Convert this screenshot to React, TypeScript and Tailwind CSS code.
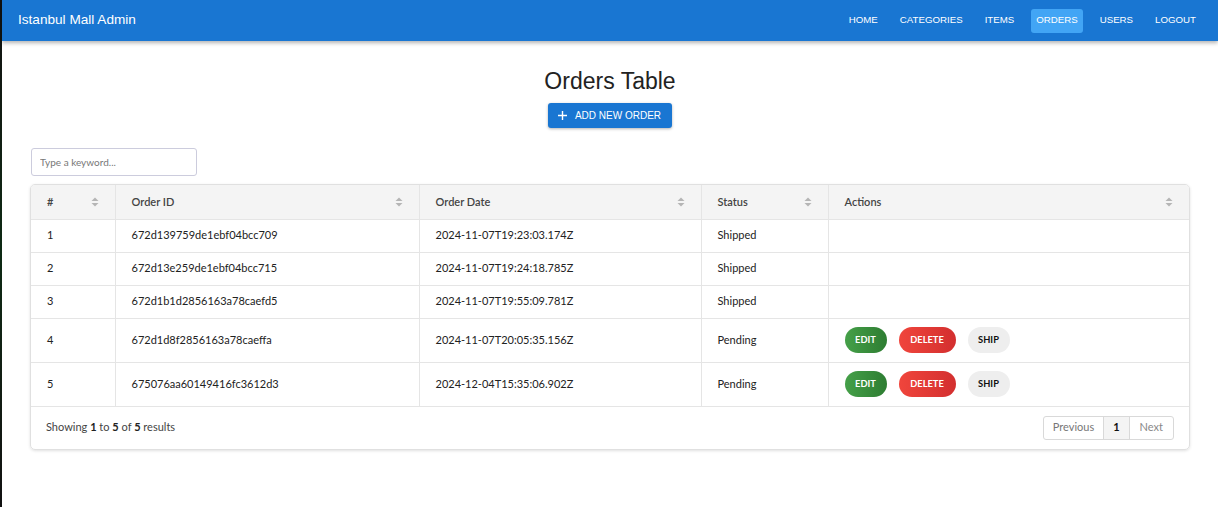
const orders = [
  { n: 1, id: "672d139759de1ebf04bcc709", date: "2024-11-07T19:23:03.174Z", status: "Shipped" },
  { n: 2, id: "672d13e259de1ebf04bcc715", date: "2024-11-07T19:24:18.785Z", status: "Shipped" },
  { n: 3, id: "672d1b1d2856163a78caefd5", date: "2024-11-07T19:55:09.781Z", status: "Shipped" },
  { n: 4, id: "672d1d8f2856163a78caeffa", date: "2024-11-07T20:05:35.156Z", status: "Pending" },
  { n: 5, id: "675076aa60149416fc3612d3", date: "2024-12-04T15:35:06.902Z", status: "Pending" },
];

const navItems = ["Home", "Categories", "Items", "Orders", "Users", "Logout"];

const SortIcon = () => (
  <svg width="8" height="10" viewBox="0 0 8 10" className="shrink-0">
    <path d="M4 0.5 L7.5 4 H0.5 Z" fill="#b5b5b5" />
    <path d="M4 9.5 L7.5 6 H0.5 Z" fill="#b5b5b5" />
  </svg>
);

const HeadCell = ({ label, className }: { label: string; className: string }) => (
  <th className={`${className} border-r border-[#e5e5e5] last:border-r-0 px-4 font-semibold text-left`}>
    <div className="flex items-center justify-between">
      <span>{label}</span>
      <SortIcon />
    </div>
  </th>
);

export default function App() {
  return (
    <div className="min-h-[507px] bg-white flex" style={{ fontFamily: "Roboto, 'Liberation Sans', sans-serif" }}>
      <div className="w-[2px] bg-gradient-to-b from-[#111] via-[#0d2a14] to-[#111] shrink-0" />
      <div className="flex-1">
        <header className="h-[41px] bg-[#1976d2] flex items-center justify-between pl-4 pr-[17px] shadow-[0_2px_4px_rgba(0,0,0,0.3)]">
          <div className="text-[13.6px] text-white" style={{ fontFamily: "'Liberation Sans', Arial, sans-serif" }}>
            Istanbul Mall Admin
          </div>
          <nav className="flex items-center">
            {navItems.map((item) => (
              <a
                key={item}
                className={`h-[24px] px-[5px] rounded-[3px] flex items-center text-[9.7px] font-medium uppercase text-white ${
                  item === "Orders" ? "bg-[#42a5f5]" : ""
                } ${item === "Home" ? "" : "ml-[12px]"}`}
                style={{ fontFamily: "'Liberation Sans', Arial, sans-serif" }}
              >
                {item}
              </a>
            ))}
          </nav>
        </header>

        <main className="px-[28px]">
          <h1 className="text-center text-[23px] text-[#222] mt-[25px] leading-[30px]" style={{ fontFamily: "'Liberation Sans', Arial, sans-serif" }}>
            Orders Table
          </h1>
          <div className="flex justify-center mt-[7px]">
            <button
              className="h-[25px] pl-[10px] pr-[11px] bg-[#1976d2] rounded-[3px] text-white text-[10px] uppercase flex items-center gap-[8px] shadow-[0_1px_3px_rgba(0,0,0,0.3)]"
              style={{ fontFamily: "'Liberation Sans', Arial, sans-serif" }}
            >
              <svg width="9" height="9" viewBox="0 0 9 9">
                <path d="M4.5 0 V9 M0 4.5 H9" stroke="white" strokeWidth="1.4" />
              </svg>
              Add New Order
            </button>
          </div>

          <div style={{ fontFamily: "Lato, 'Open Sans', sans-serif" }}>
            <input
              className="mt-[20px] ml-[1px] w-[166px] h-[28px] border border-[#ccd] rounded-[3px] px-[8px] text-[10px] outline-none placeholder:text-[#777]"
              placeholder="Type a keyword..."
            />

            <div className="mt-[8px] border border-[#e0e0e0] rounded-[5px] shadow-[0_1px_3px_rgba(0,0,0,0.12)] overflow-hidden text-[11px] text-[#222]">
              <table className="w-full border-collapse">
                <thead>
                  <tr className="h-[34px] bg-[#f4f4f4] text-[#444] border-b border-[#e5e5e5]">
                    <HeadCell label="#" className="w-[84px]" />
                    <HeadCell label="Order ID" className="w-[304px]" />
                    <HeadCell label="Order Date" className="w-[282px]" />
                    <HeadCell label="Status" className="w-[127px]" />
                    <HeadCell label="Actions" className="" />
                  </tr>
                </thead>
                <tbody>
                  {orders.map((o) => {
                    const pending = o.status === "Pending";
                    return (
                      <tr key={o.n} className={`${pending ? "h-[44px]" : "h-[33px]"} border-b border-[#e5e5e5]`}>
                        <td className="px-4 border-r border-[#e5e5e5]">{o.n}</td>
                        <td className="px-4 border-r border-[#e5e5e5]">{o.id}</td>
                        <td className="px-4 border-r border-[#e5e5e5]">{o.date}</td>
                        <td className="px-4 border-r border-[#e5e5e5]">{o.status}</td>
                        <td className="px-4">
                          {pending && (
                            <div className="flex items-center gap-[12px] text-[9.3px] font-bold">
                              <button className="h-[26px] w-[42px] rounded-full uppercase bg-gradient-to-r from-[#45a049] to-[#2e7d32] text-white">
                                Edit
                              </button>
                              <button className="h-[26px] w-[57px] rounded-full uppercase bg-gradient-to-r from-[#f0453c] to-[#d32f2f] text-white">
                                Delete
                              </button>
                              <button className="h-[26px] w-[42px] rounded-full uppercase bg-[#eeeeee] text-[#111]">
                                Ship
                              </button>
                            </div>
                          )}
                        </td>
                      </tr>
                    );
                  })}
                </tbody>
              </table>
              <div className="h-[42px] flex items-center justify-between px-[15px] text-[11px] text-[#444]">
                <div>
                  Showing <b className="text-[#222]">1</b> to <b className="text-[#222]">5</b> of{" "}
                  <b className="text-[#222]">5</b> results
                </div>
                <div className="flex border border-[#d9d9d9] rounded-[3px] h-[24px] text-[11px] overflow-hidden">
                  <span className="px-[9px] flex items-center text-[#777] border-r border-[#d9d9d9]">Previous</span>
                  <span className="px-[9px] flex items-center font-bold text-[#111] bg-[#f4f4f4] border-r border-[#d9d9d9]">1</span>
                  <span className="px-[10px] flex items-center text-[#888]">Next</span>
                </div>
              </div>
            </div>
          </div>
        </main>
      </div>
    </div>
  );
}
